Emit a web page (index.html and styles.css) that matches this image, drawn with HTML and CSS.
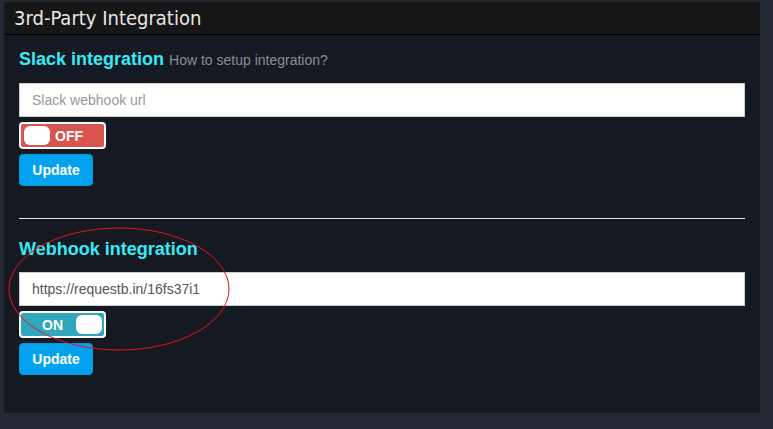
FILE: index.html
```html
<!DOCTYPE html>
<html>
<head>
<meta charset="utf-8">
<link rel="stylesheet" href="styles.css">
</head>
<body>
<div class="page">
  <div class="panel">
    <div class="panel-header">3rd-Party Integration</div>
    <div class="panel-body">
      <div class="section">
        <h4 class="section-title">Slack integration <span class="help">How to setup integration?</span></h4>
        <input class="field" type="text" placeholder="Slack webhook url">
        <div class="toggle off"><span class="knob"></span><span class="label">OFF</span></div>
        <button class="btn">Update</button>
      </div>
      <hr class="divider">
      <div class="section second">
        <h4 class="section-title">Webhook integration</h4>
        <input class="field" type="text" value="https://requestb.in/16fs37i1">
        <div class="toggle on"><span class="label">ON</span><span class="knob"></span></div>
        <button class="btn">Update</button>
      </div>
      <div class="footer-lines"></div>
    </div>
  </div>
  <svg class="annotation" width="226" height="128" viewBox="0 0 226 128">
    <ellipse cx="113" cy="64" rx="110" ry="61" fill="none" stroke="#e8121c" stroke-width="1"/>
  </svg>
</div>
</body>
</html>
```
FILE: styles.css
```css
html, body {
  margin: 0;
  padding: 0;
  background: #232a33;
  height: 100%;
}
.page {
  position: relative;
  padding: 2px 13px 0 4px;
  font-family: "Liberation Sans", Arial, sans-serif;
}
.panel {
  background: #151922;
}
.panel-header {
  background: #161616;
  height: 32px;
  border-bottom: 1px solid #000;
  padding-left: 10px;
  color: #e8e8e8;
  font-family: "DejaVu Sans Condensed", "DejaVu Sans", sans-serif;
  font-size: 20px;
  line-height: 32px;
  font-weight: 300;
}
.panel-body {
  padding: 12px 15px 16px 15px;
}
.section-title {
  margin: 0;
  font-size: 18px;
  line-height: 24px;
  height: 24px;
  font-weight: bold;
  color: #36ebf5;
}
.help {
  font-size: 14px;
  line-height: 16px;
  font-weight: normal;
  color: #8a8f96;
}
.field {
  display: block;
  box-sizing: border-box;
  width: 100%;
  height: 34px;
  margin-top: 12px;
  border: 1px solid #cccccc;
  padding: 0 12px;
  font-family: "Liberation Sans", Arial, sans-serif;
  font-size: 14px;
  color: #555;
  background: #fff;
  outline: none;
}
.field::placeholder {
  color: #999;
}
.second .field {
  margin-top: 11px;
}
.toggle {
  box-sizing: border-box;
  width: 87px;
  height: 27px;
  margin-top: 5px;
  border: 2px solid #fff;
  border-radius: 4px;
  display: flex;
  align-items: center;
  padding: 0 2px 0 3px;
  color: #fff;
  font-weight: bold;
  font-size: 14px;
}
.toggle.off {
  background: #d9534f;
  gap: 5px;
}
.toggle.on {
  background: #31a7be;
  justify-content: space-between;
  padding-left: 21px;
}
.knob {
  width: 26px;
  height: 19px;
  background: #fff;
  border-radius: 6px;
}
.btn {
  display: block;
  box-sizing: border-box;
  margin-top: 5px;
  width: 74px;
  height: 32px;
  padding: 0;
  border: 1px solid #0a96d8;
  border-radius: 4px;
  background: #03a2ef;
  color: #fff;
  font-family: "Liberation Sans", Arial, sans-serif;
  font-weight: bold;
  font-size: 14px;
}
.divider {
  margin: 32px 0 18px 0;
  border: 0;
  border-top: 1px solid #e4e4e4;
  height: 0;
}
.footer-lines {
  margin-top: 10px;
  height: 10px;
  border-top: 1px solid #1c1f22;
  border-bottom: 1px solid #1c1f22;
}
.annotation {
  position: absolute;
  left: 6px;
  top: 225px;
}
```
